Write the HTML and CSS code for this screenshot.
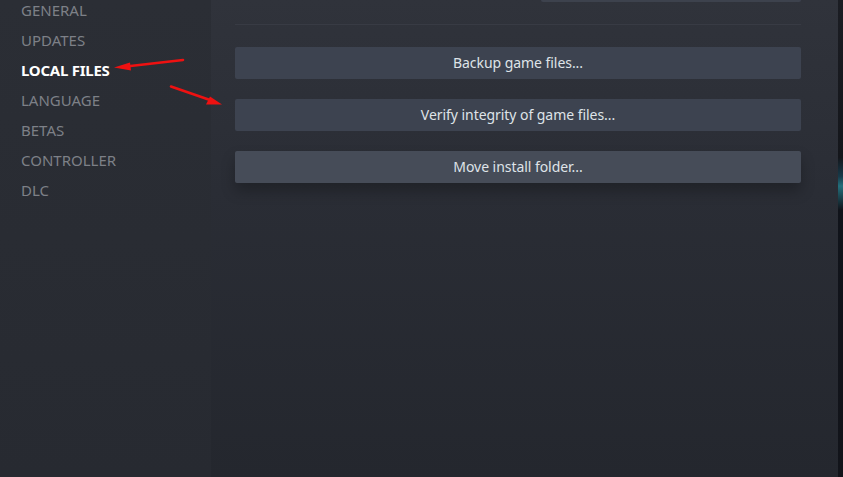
FILE: index.html
```html
<!DOCTYPE html>
<html>
<head>
<meta charset="utf-8">
<link rel="stylesheet" href="styles.css">
</head>
<body>
<div class="app">
  <nav class="sidebar">
    <div class="nav-item">GENERAL</div>
    <div class="nav-item">UPDATES</div>
    <div class="nav-item active">LOCAL FILES</div>
    <div class="nav-item">LANGUAGE</div>
    <div class="nav-item">BETAS</div>
    <div class="nav-item">CONTROLLER</div>
    <div class="nav-item">DLC</div>
  </nav>
  <main class="panel">
    <div class="top-btn"></div>
    <div class="separator"></div>
    <div class="buttons">
      <div class="btn">Backup game files...</div>
      <div class="btn">Verify integrity of game files...</div>
      <div class="btn hover">Move install folder...</div>
    </div>
  </main>
  <div class="backdrop"></div>
</div>
<svg class="annotations" width="843" height="477" viewBox="0 0 843 477">
  <g stroke="#ee1111" stroke-width="2.6" stroke-linecap="round" fill="#ee1111">
    <line x1="183" y1="60" x2="126" y2="66.5"/>
    <polygon stroke="none" points="114,67.5 130,62.5 131,70.5"/>
    <line x1="171" y1="86.5" x2="210" y2="100"/>
    <polygon stroke="none" points="222,104.5 206,104.5 210,96.5"/>
  </g>
</svg>
</body>
</html>
```

FILE: styles.css
```css
html, body {
  margin: 0;
  padding: 0;
  width: 843px;
  height: 477px;
  overflow: hidden;
  background: #16181d;
}

.app {
  display: flex;
  width: 843px;
  height: 477px;
}

.sidebar {
  width: 211px;
  flex: none;
  background: linear-gradient(to bottom, #2b2e35 0%, #272a31 100%);
  padding-top: 0;
  box-sizing: border-box;
}

.nav-item {
  height: 30px;
  line-height: 20px;
  padding-left: 21px;
  font-family: "Noto Sans", "Open Sans", sans-serif;
  font-size: 15px;
  color: #7d8087;
}

.nav-item.active {
  color: #ffffff;
  font-weight: 700;
  letter-spacing: -0.25px;
}

.panel {
  width: 627px;
  flex: none;
  background: linear-gradient(to bottom, #30333b 0%, #2a2d35 40%, #24272e 100%);
  padding: 0 37px 0 24px;
  box-sizing: border-box;
  display: flex;
  flex-direction: column;
}

.top-btn {
  height: 2px;
  width: 260px;
  margin-left: auto;
  background: #3d424d;
  border-radius: 0 0 2px 2px;
}

.separator {
  height: 1px;
  margin-top: 22px;
  background: #383b44;
}

.buttons {
  margin-top: 22px;
  display: flex;
  flex-direction: column;
  gap: 20px;
}

.btn {
  height: 32px;
  border-radius: 2px;
  background: #3d4350;
  color: #dfe3e8;
  font-family: "Noto Sans", "Open Sans", sans-serif;
  font-size: 14px;
  letter-spacing: -0.05px;
  line-height: 32px;
  text-align: center;
}

.btn.hover {
  background: #464c58;
  box-shadow: 0 8px 14px rgba(0, 0, 0, 0.25);
}

.backdrop {
  flex: 1;
  background: linear-gradient(to bottom, #1b1d23 0%, #14161b 33%, #173a4a 37%, #236f7c 39%, #10131a 44%, #12141a 100%);
}

.annotations {
  position: absolute;
  left: 0;
  top: 0;
  pointer-events: none;
}
```
